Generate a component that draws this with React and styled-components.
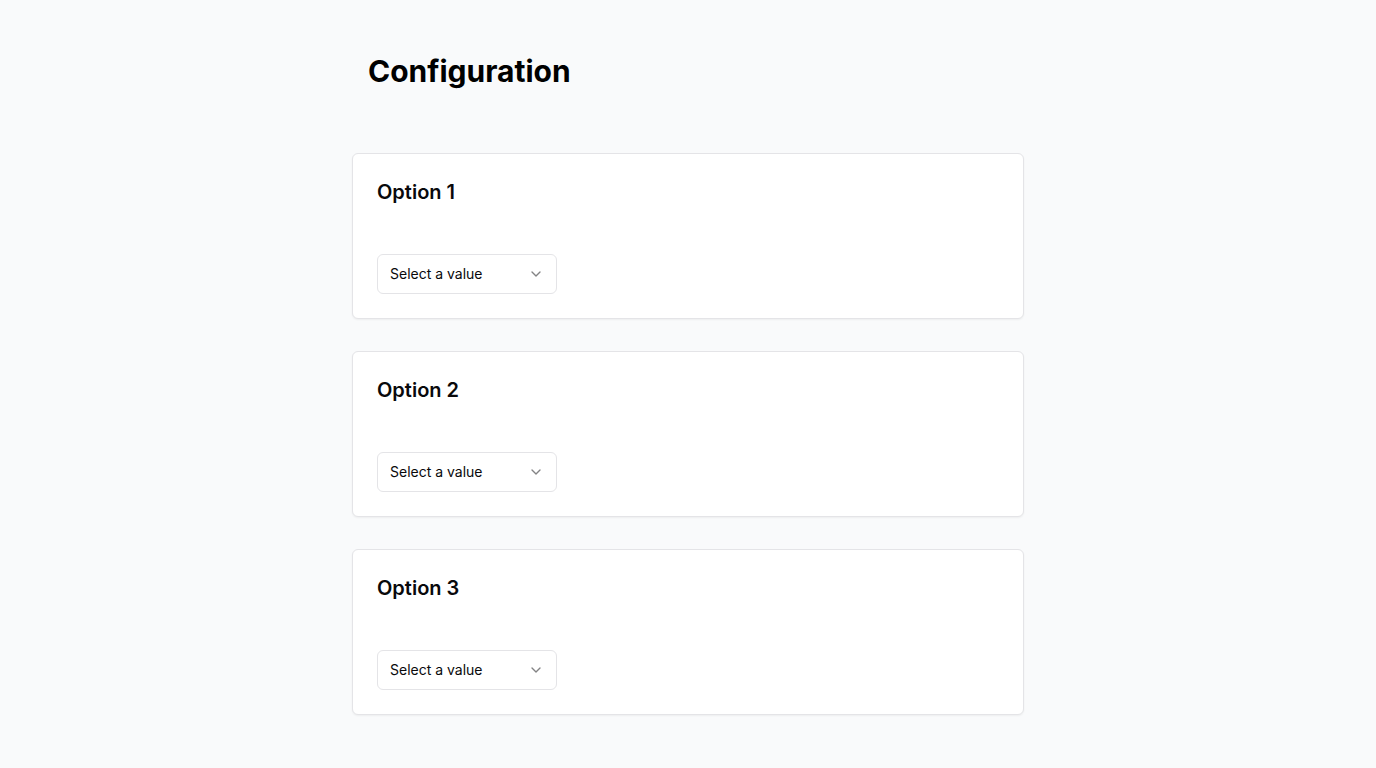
import styled, { createGlobalStyle } from 'styled-components';
import { ChevronDown } from 'lucide-react';

const GlobalStyle = createGlobalStyle`
  * { box-sizing: border-box; }
  body {
    margin: 0;
    background-color: #f9fafb;
    font-family: Inter, "Noto Sans", sans-serif;
    color: #09090b;
  }
`;

const Page = styled.main`
  min-height: 100vh;
  padding: 53px 0 48px;
`;

const Container = styled.div`
  width: 672px;
  margin: 0 auto;
`;

const Title = styled.h1`
  margin: 0 0 64px;
  padding: 0 16px;
  font-size: 30px;
  line-height: 36px;
  font-weight: 700;
  color: #000;
`;

const List = styled.div`
  display: flex;
  flex-direction: column;
  gap: 32px;
`;

const Card = styled.section`
  padding: 24px;
  background: #fff;
  border: 1px solid #e4e4e7;
  border-radius: 6px;
  box-shadow: 0 1px 2px rgba(0, 0, 0, 0.05);
`;

const CardTitle = styled.h2`
  margin: 0 0 48px;
  font-size: 20px;
  line-height: 28px;
  font-weight: 600;
`;

const Trigger = styled.button`
  display: flex;
  align-items: center;
  justify-content: space-between;
  width: 180px;
  height: 40px;
  padding: 0 12px 1px;
  background: #fff;
  border: 1px solid #e4e4e7;
  border-radius: 6px;
  font-family: inherit;
  font-size: 14px;
  line-height: 20px;
  color: #09090b;
  cursor: pointer;

  svg {
    opacity: 0.5;
  }
`;

const options = ['Option 1', 'Option 2', 'Option 3'];

export default function App() {
  return (
    <Page>
      <GlobalStyle />
      <Container>
        <Title>Configuration</Title>
        <List>
          {options.map((label) => (
            <Card key={label}>
              <CardTitle>{label}</CardTitle>
              <Trigger type="button">
                <span>Select a value</span>
                <ChevronDown size={16} />
              </Trigger>
            </Card>
          ))}
        </List>
      </Container>
    </Page>
  );
}
